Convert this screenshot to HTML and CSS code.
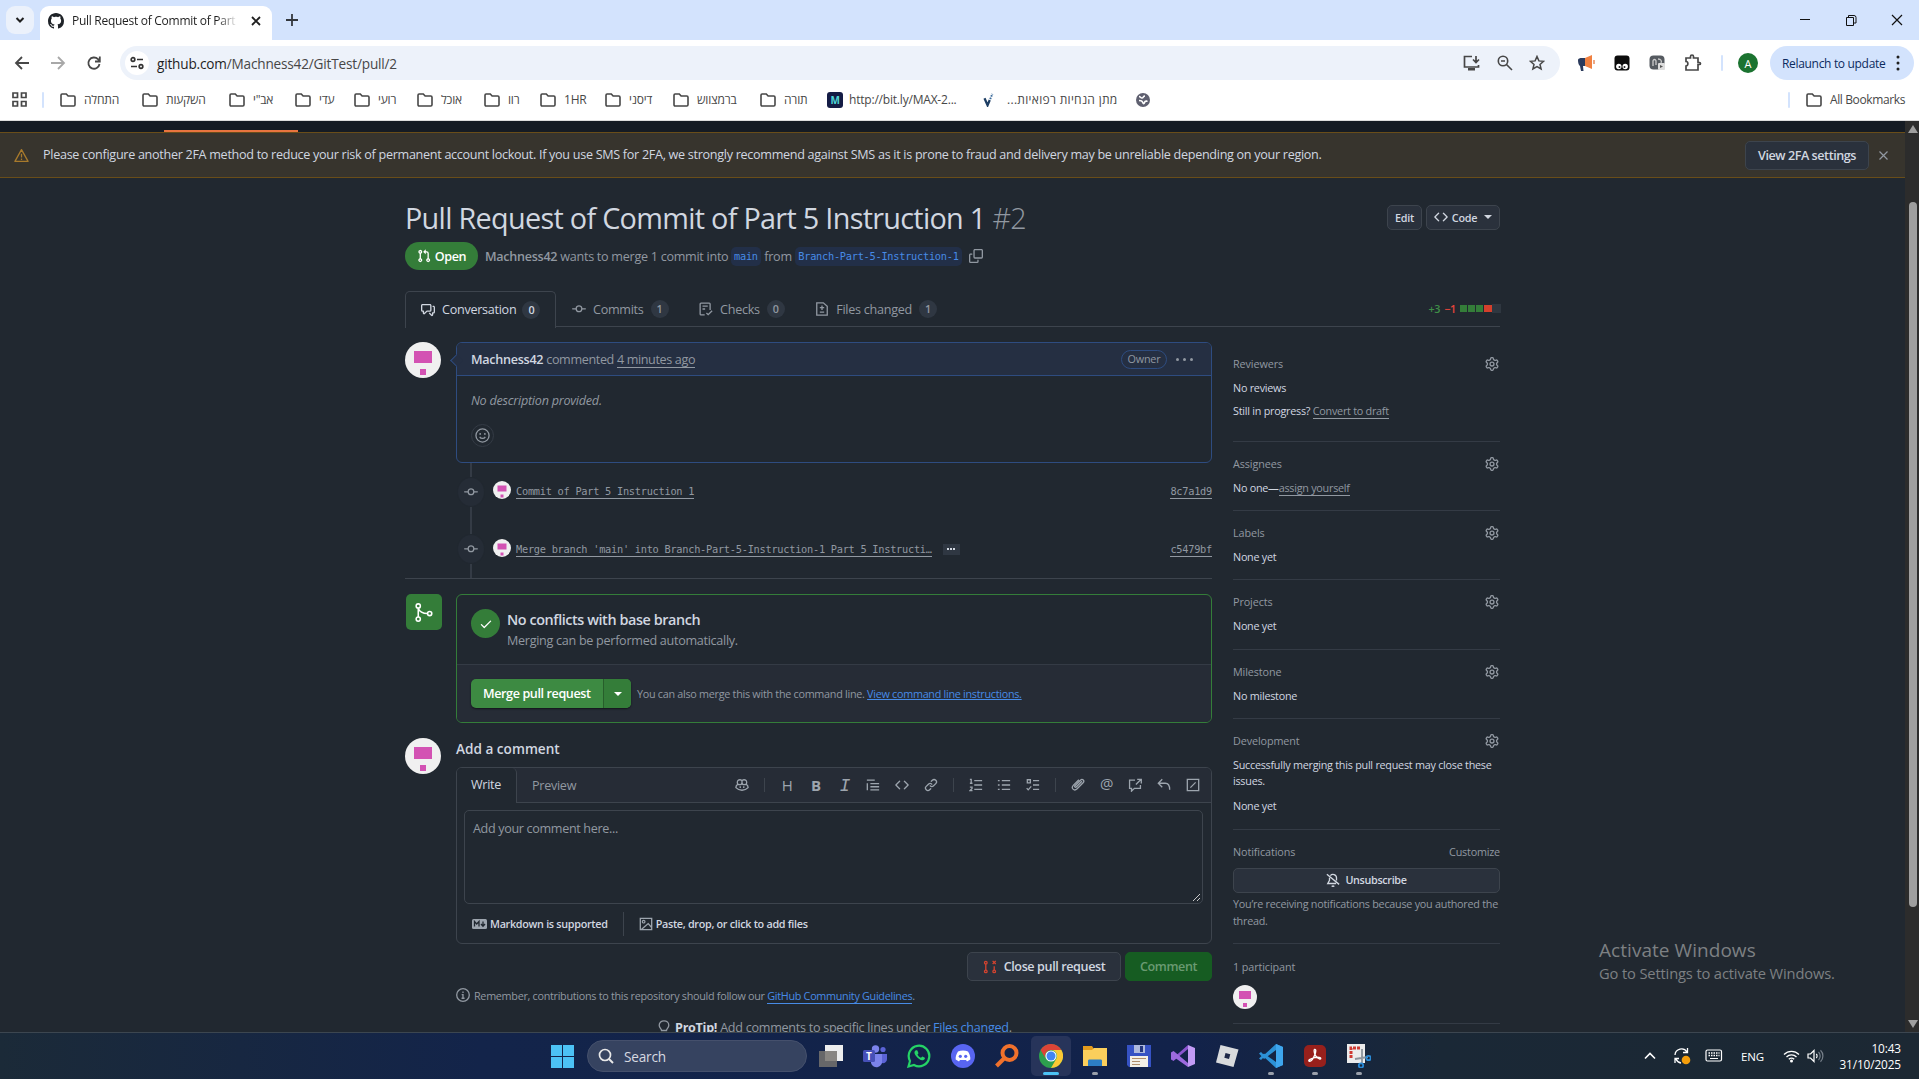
FILE: index.html
```html
<!DOCTYPE html>
<html lang="en">
<head>
<meta charset="utf-8">
<title>Pull Request of Commit of Part 5 Instruction 1</title>
<link rel="stylesheet" href="styles.css">
</head>
<body>
<svg class="defs" width="0" height="0">
  <symbol id="folder" viewBox="0 0 16 14"><path d="M1 2.2C1 1.5 1.4 1 2.1 1h4.2l1.8 2h5.7c.7 0 1.2.5 1.2 1.2v7.6c0 .7-.5 1.2-1.2 1.2H2.1C1.4 13 1 12.500 1 11.800Z" fill="none" stroke="currentColor" stroke-width="1.6"/></symbol>
  <symbol id="pr" viewBox="0 0 16 16"><path d="M1.500 3.250a2.250 2.250 0 1 1 3 2.122v5.256a2.251 2.251 0 1 1-1.500 0V5.372A2.250 2.250 0 0 1 1.500 3.250Zm5.677-.177L9.573.677A.25.25 0 0 1 10 .854V2.500h1A2.500 2.500 0 0 1 13.500 5v5.628a2.251 2.251 0 1 1-1.500 0V5a1 1 0 0 0-1-1h-1v1.646a.25.25 0 0 1-.427.177L7.177 3.427a.25.25 0 0 1 0-.354ZM3.750 2.500a.75.75 0 1 0 0 1.500.75.75 0 0 0 0-1.500Zm0 9.500a.75.75 0 1 0 0 1.500.75.75 0 0 0 0-1.500Zm8.250.75a.75.75 0 1 0 1.500 0 .75.75 0 0 0-1.500 0Z"/></symbol>
  <symbol id="commit" viewBox="0 0 16 16"><path d="M11.930 8.500a4.002 4.002 0 0 1-7.860 0H.75a.75.75 0 0 1 0-1.500h3.320a4.002 4.002 0 0 1 7.860 0h3.320a.75.75 0 0 1 0 1.500Zm-1.430-.75a2.500 2.500 0 1 0-5 0 2.500 2.500 0 0 0 5 0Z"/></symbol>
  <symbol id="code" viewBox="0 0 16 16"><path d="m11.280 3.220 4.250 4.250a.75.75 0 0 1 0 1.060l-4.250 4.250a.749.749 0 0 1-1.275-.326.749.749 0 0 1 .215-.734L13.940 8l-3.720-3.720a.749.749 0 0 1 .326-1.275.749.749 0 0 1 .734.215Zm-6.560 0a.751.751 0 0 1 1.042.018.751.751 0 0 1 .018 1.042L2.060 8l3.720 3.720a.749.749 0 0 1-.326 1.275.749.749 0 0 1-.734-.215L.47 8.530a.75.75 0 0 1 0-1.060Z"/></symbol>
  <symbol id="gear" viewBox="0 0 16 16"><path d="M8 0a8.200 8.200 0 0 1 .701.031C9.444.095 9.990.645 10.160 1.290l.288 1.107c.018.066.079.158.212.224.231.114.454.243.668.386.123.082.233.09.299.071l1.103-.303c.644-.176 1.392.021 1.820.63.27.385.506.792.704 1.218.315.675.111 1.422-.364 1.891l-.814.806c-.049.048-.098.147-.088.294.016.257.016.515 0 .772-.01.147.038.246.088.294l.814.806c.475.469.679 1.216.364 1.891a7.977 7.977 0 0 1-.704 1.217c-.428.61-1.176.807-1.820.63l-1.102-.302c-.067-.019-.177-.011-.3.071a5.909 5.909 0 0 1-.668.386c-.133.066-.194.158-.211.224l-.29 1.106c-.168.646-.715 1.196-1.458 1.260a8.006 8.006 0 0 1-1.402 0c-.743-.064-1.289-.614-1.458-1.260l-.289-1.106c-.018-.066-.079-.158-.212-.224a5.738 5.738 0 0 1-.668-.386c-.123-.082-.233-.09-.299-.071l-1.103.303c-.644.176-1.392-.021-1.820-.63a8.120 8.120 0 0 1-.704-1.218c-.315-.675-.111-1.422.363-1.891l.815-.806c.05-.048.098-.147.088-.294a6.214 6.214 0 0 1 0-.772c.01-.147-.038-.246-.088-.294l-.815-.806C.635 6.045.431 5.298.746 4.623a7.920 7.920 0 0 1 .704-1.217c.428-.61 1.176-.807 1.820-.63l1.102.302c.067.019.177.011.3-.071.214-.143.437-.272.668-.386.133-.066.194-.158.211-.224l.29-1.106C6.009.645 6.556.095 7.299.03 7.530.01 7.764 0 8 0Zm-.571 1.525c-.036.003-.108.036-.137.146l-.289 1.105c-.147.561-.549.967-.998 1.189-.173.086-.34.183-.5.29-.417.278-.97.423-1.529.27l-1.103-.303c-.109-.03-.175.016-.195.045-.22.312-.412.644-.573.99-.014.031-.021.11.059.19l.815.806c.411.406.562.957.53 1.456a4.709 4.709 0 0 0 0 .582c.032.499-.119 1.050-.53 1.456l-.815.806c-.081.08-.073.159-.059.19.162.346.353.677.573.989.02.03.085.076.195.046l1.102-.303c.56-.153 1.113-.008 1.530.27.161.107.328.204.501.29.447.222.85.629.997 1.189l.289 1.105c.029.109.101.143.137.146a6.600 6.600 0 0 0 1.142 0c.036-.003.108-.036.137-.146l.289-1.105c.147-.561.549-.967.998-1.189.173-.086.34-.183.5-.29.417-.278.97-.423 1.529-.27l1.103.303c.109.029.175-.016.195-.045.22-.313.411-.644.573-.99.014-.031.021-.11-.059-.19l-.815-.806c-.411-.406-.562-.957-.53-1.456a4.709 4.709 0 0 0 0-.582c-.032-.499.119-1.050.53-1.456l.815-.806c.081-.08.073-.159.059-.19a6.464 6.464 0 0 0-.573-.989c-.02-.03-.085-.076-.195-.046l-1.102.303c-.56.153-1.113.008-1.530-.27a4.440 4.440 0 0 0-.501-.29c-.447-.222-.85-.629-.997-1.189l-.289-1.105c-.029-.11-.101-.143-.137-.146a6.600 6.600 0 0 0-1.142 0ZM11 8a3 3 0 1 1-6 0 3 3 0 0 1 6 0ZM9.500 8a1.500 1.500 0 1 0-3.001.001A1.500 1.500 0 0 0 9.500 8Z"/></symbol>
  <symbol id="avatar" viewBox="0 0 36 36"><circle cx="18" cy="18" r="18" fill="#f0f0f0"/><path d="M9 9h18v12H9zM15 27h6v6h-6z" fill="#d352b3"/></symbol>
</svg>

<header class="browser">
  <div class="tabstrip">
    <span class="tab-search"><svg width="10" height="8" viewBox="0 0 10 8"><path d="M1.500 2 5 5.500 8.500 2" fill="none" stroke="#1f1f1f" stroke-width="2"/></svg></span>
    <div class="tab">
      <svg width="16" height="16" viewBox="0 0 16 16"><path fill="#1f2328" d="M8 0c4.420 0 8 3.580 8 8a8.013 8.013 0 0 1-5.450 7.590c-.4.08-.55-.17-.55-.38 0-.27.01-1.130.01-2.200 0-.75-.25-1.230-.54-1.480 1.780-.2 3.650-.88 3.650-3.950 0-.88-.31-1.590-.82-2.150.08-.2.36-1.020-.08-2.120 0 0-.67-.22-2.200.82-.64-.18-1.320-.27-2-.27-.68 0-1.360.09-2 .27-1.530-1.030-2.200-.82-2.200-.82-.44 1.100-.16 1.920-.08 2.120-.51.56-.82 1.280-.82 2.150 0 3.060 1.860 3.750 3.640 3.950-.23.2-.44.55-.51 1.070-.46.21-1.610.55-2.330-.66-.15-.24-.6-.83-1.230-.82-.67.01-.27.38.01.53.34.19.73.9.82 1.130.16.45.68 1.310 2.690.94 0 .67.01 1.300.01 1.490 0 .21-.15.45-.55.38A7.995 7.995 0 0 1 0 8c0-4.420 3.580-8 8-8Z"/></svg>
      <span class="tab-title">Pull Request of Commit of Part 5</span>
      <svg class="tab-close" width="10" height="10" viewBox="0 0 10 10"><path d="m1 1 8 8m0-8-8 8" stroke="#1f1f1f" stroke-width="1.800"/></svg>
    </div>
    <svg class="new-tab" width="12" height="12" viewBox="0 0 12 12"><path d="M6 0v12M0 6h12" stroke="#33373d" stroke-width="1.800"/></svg>
    <div class="window-controls">
      <svg width="12" height="12" viewBox="0 0 12 12"><path d="M1 5.500h10" stroke="#111"/></svg>
      <svg width="12" height="12" viewBox="0 0 12 12"><path d="M1.500 3.500h7v8h-7zM3.500 3V1.500h5.500a2 2 0 0 1 2 2V9H9" fill="none" stroke="#111"/></svg>
      <svg width="12" height="12" viewBox="0 0 12 12"><path d="m1 1 10 10m0-10L1 11" stroke="#111" stroke-width="1.200"/></svg>
    </div>
  </div>
  <div class="toolbar">
    <div class="nav">
      <svg width="16" height="16" viewBox="0 0 16 16"><path d="M15 8H2.500M8 2 2 8l6 6" fill="none" stroke="#474747" stroke-width="1.800"/></svg>
      <svg width="16" height="16" viewBox="0 0 16 16"><path d="M1 8h12.500M8 2l6 6-6 6" fill="none" stroke="#a8a8a8" stroke-width="1.800"/></svg>
      <svg width="16" height="16" viewBox="0 0 16 16"><path d="M13.500 9A5.600 5.600 0 1 1 12 4.200L13.500 6M13.800 1.500V6.500H9" fill="none" stroke="#474747" stroke-width="1.800"/></svg>
    </div>
    <div class="omnibox">
      <span class="site-info"><svg width="14" height="14" viewBox="0 0 14 14"><g fill="none" stroke="#333" stroke-width="1.700"><circle cx="3" cy="3.500" r="1.800"/><circle cx="11" cy="10.500" r="1.800"/><path d="M7 3.500h6M1 10.500h6"/></g></svg></span>
      <span class="url">github.com<i>/Machness42/GitTest/pull/2</i></span>
      <div class="omni-actions">
        <svg width="18" height="16" viewBox="0 0 18 16"><path d="M9 1.500H1.500v10.500h14V10M13 1v6M10 4.500l3 3 3-3" fill="none" stroke="#474747" stroke-width="1.700"/><path d="M5 13h7v2.500H5z" fill="#474747"/></svg>
        <svg width="16" height="16" viewBox="0 0 16 16"><g fill="none" stroke="#474747" stroke-width="1.600"><circle cx="6" cy="6" r="4.700"/><path d="m9.500 9.500 5.500 5.500M4 6h4"/></g></svg>
        <svg width="16" height="16" viewBox="0 0 16 16"><path d="m8 1.500 1.900 4.400 4.700.4-3.600 3.100 1.100 4.600L8 11.600 3.900 14 5 9.400 1.400 6.300l4.700-.4Z" fill="none" stroke="#474747" stroke-width="1.500"/></svg>
      </div>
    </div>
    <div class="extensions">
      <svg width="18" height="18" viewBox="0 0 18 18"><path d="M1 6c0-1.500 2-2 4-2h3v8H6l.5 5H4l-1-5C1.500 11 1 8 1 6Z" fill="#2b3a5c"/><path d="M8 4l7-3v14l-7-3Z" fill="#f08040"/><path d="M17 6v4" stroke="#e98b5b" stroke-width="1.500"/></svg>
      <svg width="16" height="16" viewBox="0 0 16 16"><rect x=".5" y=".5" width="15" height="15" rx="3" fill="#0b0b0b"/><circle cx="4.800" cy="11.500" r="2.700" fill="#fff"/><circle cx="11.200" cy="11.500" r="2.700" fill="#fff"/><circle cx="5.500" cy="12" r="1" fill="#222"/><circle cx="10.500" cy="12" r="1" fill="#222"/></svg>
      <svg width="16" height="16" viewBox="0 0 16 16"><rect x=".5" y=".5" width="15" height="14" rx="4" fill="#555a60"/><path d="M4 11V6c0-2 3-2 3 0v4M9 4c3 0 4 2 3 4" fill="none" stroke="#ccc" stroke-width="1.300"/><rect x="9" y="8" width="7" height="7" rx="1" fill="#ddd"/><path d="M11 10l3 1.500-3 1.500Z" fill="#555"/></svg>
      <svg width="18" height="18" viewBox="0 0 18 18"><path d="M2 4h4.500V2.500a1.500 1.500 0 0 1 3 0V4H14v4.500h1.500a1 1 0 0 1 0 2H14V16H2v-4c2.500 0 2.500-4.500 0-4.500Z" fill="none" stroke="#474747" stroke-width="1.700"/></svg>
      <span class="bar"></span>
      <span class="profile">A</span>
    </div>
    <div class="relaunch">Relaunch to update<svg width="4" height="16" viewBox="0 0 4 16"><g fill="#1f1f1f"><circle cx="2" cy="2" r="1.500"/><circle cx="2" cy="8" r="1.500"/><circle cx="2" cy="14" r="1.500"/></g></svg></div>
  </div>
  <div class="bookmarks">
    <svg class="apps" width="15" height="15" viewBox="0 0 15 15"><path d="M1 1h4.500v4.500H1zM9.500 1H14v4.500H9.500zM1 9.500h4.500V14H1zM9.500 9.500H14V14H9.500z" fill="none" stroke="#474747" stroke-width="1.700"/></svg>
    <span class="bar"></span>
    <div class="bm-list">
      <span><svg><use href="#folder"/></svg>התחלה</span>
      <span><svg><use href="#folder"/></svg>השקעות</span>
      <span><svg><use href="#folder"/></svg>אב"י</span>
      <span><svg><use href="#folder"/></svg>עדי</span>
      <span><svg><use href="#folder"/></svg>רועי</span>
      <span><svg><use href="#folder"/></svg>אוכל</span>
      <span><svg><use href="#folder"/></svg>רוו</span>
      <span><svg><use href="#folder"/></svg>1HR</span>
      <span><svg><use href="#folder"/></svg>דיסני</span>
      <span><svg><use href="#folder"/></svg>ברמצווש</span>
      <span><svg><use href="#folder"/></svg>תורה</span>
      <span class="bm-max"><b>M</b>http://bit.ly/MAX-2...</span>
      <span class="bm-v"><svg viewBox="0 0 16 16"><path d="m4 6 3.500 8L10 8" fill="none" stroke="#1d3d63" stroke-width="2.600"/><path d="m10.500 7 2.500-6" stroke="#3c6c9c" stroke-width="2.200" stroke-dasharray="2 1"/></svg><bdi dir="rtl">מתן הנחיות רפואיות...</bdi></span>
      <span><svg width="14" height="14" viewBox="0 0 14 14"><circle cx="7" cy="7" r="7" fill="#5f6070"/><path d="M3 3.500c1.500 0 1.500 1.500 3 1.500s1-2 3-2M3 7.500c2 0 3 0 3.500 1.500S8 11.500 8.500 9.500s1.500-1 3-1.500" fill="none" stroke="#fff" stroke-width="1.600"/></svg></span>
    </div>
    <span class="bar"></span>
    <span class="all-bm"><svg><use href="#folder"/></svg>All Bookmarks</span>
  </div>
</header>

<div class="viewport">
  <div class="page">
    <div class="repo-nav"><span></span></div>
    <div class="banner">
      <svg width="15" height="15" viewBox="0 0 16 16"><path d="M8 1.700 15 14.300H1ZM8 6v4M8 11.300v1.500" fill="none" stroke="#a87a2c" stroke-width="1.400" stroke-linejoin="round"/></svg>
      <p>Please configure another 2FA method to reduce your risk of permanent account lockout. If you use SMS for 2FA, we strongly recommend against SMS as it is prone to fraud and delivery may be unreliable depending on your region.</p>
      <a class="btn">View 2FA settings</a>
      <svg class="dismiss" width="9" height="9" viewBox="0 0 9 9"><path d="m.5.5 8 8m0-8-8 8" stroke="#9198a1" stroke-width="1.200"/></svg>
    </div>

    <main class="container">
      <div class="title-row">
        <h1>Pull Request of Commit of Part 5 Instruction 1 <span>#2</span></h1>
        <a class="btn btn-sm edit">Edit</a>
        <a class="btn btn-sm code-btn"><svg width="14" height="14"><use href="#code"/></svg>Code<i class="caret"></i></a>
      </div>
      <div class="status-row">
        <span class="state"><svg width="14" height="14"><use href="#pr"/></svg>Open</span>
        <span class="merge-info"><b>Machness42</b> wants to merge 1 commit into</span>
        <span class="ref">main</span><span class="from">from</span><span class="ref">Branch-Part-5-Instruction-1</span>
        <svg class="copy" width="14" height="14" viewBox="0 0 16 16"><path d="M0 6.750C0 5.784.784 5 1.750 5h1.500a.75.75 0 0 1 0 1.500h-1.500a.25.25 0 0 0-.25.25v7.500c0 .138.112.25.25.25h7.500a.25.25 0 0 0 .25-.25v-1.500a.75.75 0 0 1 1.500 0v1.500A1.750 1.750 0 0 1 9.250 16h-7.500A1.750 1.750 0 0 1 0 14.250ZM5 1.750C5 .784 5.784 0 6.750 0h7.500C15.216 0 16 .784 16 1.750v7.500A1.750 1.750 0 0 1 14.250 11h-7.500A1.750 1.750 0 0 1 5 9.250Zm1.750-.25a.25.25 0 0 0-.25.25v7.500c0 .138.112.25.25.25h7.500a.25.25 0 0 0 .25-.25v-7.500a.25.25 0 0 0-.25-.25Z"/></svg>
      </div>
      <nav class="tabs">
        <a class="active"><svg width="14" height="14" viewBox="0 0 16 16"><path d="M1.750 1h8.500c.966 0 1.750.784 1.750 1.750v5.500A1.750 1.750 0 0 1 10.250 10H7.061l-2.574 2.573A1.458 1.458 0 0 1 2 11.543V10h-.25A1.750 1.750 0 0 1 0 8.250v-5.500C0 1.784.784 1 1.750 1ZM1.500 2.750v5.500c0 .138.112.25.25.25h1a.75.75 0 0 1 .75.75v2.190l2.720-2.720a.749.749 0 0 1 .53-.22h3.500a.25.25 0 0 0 .25-.25v-5.500a.25.25 0 0 0-.25-.25h-8.500a.25.25 0 0 0-.25.25Zm13 2a.25.25 0 0 0-.25-.25h-.5a.75.75 0 0 1 0-1.500h.5c.966 0 1.750.784 1.750 1.750v5.500A1.750 1.750 0 0 1 14.250 12H14v1.543a1.458 1.458 0 0 1-2.487 1.030L9.220 12.280a.749.749 0 0 1 .326-1.275.749.749 0 0 1 .734.215l2.220 2.220v-2.190a.75.75 0 0 1 .75-.75h1a.25.25 0 0 0 .25-.25Z"/></svg>Conversation<em>0</em></a>
        <a><svg width="14" height="14"><use href="#commit"/></svg>Commits<em>1</em></a>
        <a><svg width="14" height="14" viewBox="0 0 16 16"><path d="M6.500 14.700H2.300a1 1 0 0 1-1-1V2.300a1 1 0 0 1 1-1h9.400a1 1 0 0 1 1 1V9M4 4.700h6M4 8h3M8.500 12.500l2 2 4.500-4.500" fill="none" stroke="currentColor" stroke-width="1.500"/></svg>Checks<em>0</em></a>
        <a><svg width="14" height="14" viewBox="0 0 16 16"><path d="M2 1h7.500L14 5v10H2ZM8 4v5M5.500 6.500h5M5.500 11.500h5" fill="none" stroke="currentColor" stroke-width="1.500"/></svg>Files changed<em>1</em></a>
        <div class="diffstat"><b class="add">+3</b><b class="del">−1</b><i></i><i></i><i></i><i class="r"></i><i class="n"></i></div>
      </nav>

      <div class="columns">
        <section class="discussion">
          <div class="thread">
            <svg class="avatar"><use href="#avatar"/></svg>
            <article class="comment">
              <header><b>Machness42</b>&nbsp;commented&nbsp;<u>4 minutes ago</u><span class="owner">Owner</span><span class="dots"><i></i><i></i><i></i></span></header>
              <p>No description provided.</p>
              <span class="react"><svg width="15" height="15" viewBox="0 0 16 16"><g fill="none" stroke="#9198a1" stroke-width="1.400"><circle cx="8" cy="8" r="7"/><path d="M5 9.500c1.300 2.200 4.700 2.200 6 0"/></g><circle cx="5.500" cy="6.300" r="1" fill="#9198a1"/><circle cx="10.500" cy="6.300" r="1" fill="#9198a1"/></svg></span>
            </article>
          </div>
          <div class="timeline">
            <div class="event"><span class="badge"><svg width="14" height="14"><use href="#commit"/></svg></span><svg class="mini"><use href="#avatar"/></svg><a>Commit of Part 5 Instruction 1</a><a class="sha">8c7a1d9</a></div>
            <div class="event"><span class="badge"><svg width="14" height="14"><use href="#commit"/></svg></span><svg class="mini"><use href="#avatar"/></svg><a>Merge branch 'main' into Branch-Part-5-Instruction-1 Part 5 Instructi…</a><span class="more"><i></i><i></i><i></i></span><a class="sha">c5479bf</a></div>
          </div>
          <div class="thread merge">
            <span class="merge-icon"><svg width="21" height="21" viewBox="0 0 16 16"><g fill="none" stroke="#fff" stroke-width="1.200"><circle cx="4" cy="3" r="1.600"/><circle cx="4" cy="13" r="1.600"/><circle cx="12.700" cy="8.800" r="1.600"/><path d="M4 4.600v6.800M4 5c1 2.500 3.500 3.800 7 3.800"/></g></svg></span>
            <div class="merge-box">
              <div class="mergeable">
                <span class="ok"><svg width="14" height="14" viewBox="0 0 16 16"><path fill="#fff" d="M13.780 4.220a.75.75 0 0 1 0 1.060l-7.250 7.250a.75.75 0 0 1-1.060 0L2.220 9.280a.751.751 0 0 1 .018-1.042.751.751 0 0 1 1.042-.018L6 10.940l6.720-6.720a.75.75 0 0 1 1.060 0Z"/></svg></span>
                <div><h3>No conflicts with base branch</h3><p>Merging can be performed automatically.</p></div>
              </div>
              <div class="merge-actions"><span class="merge-btn">Merge pull request<span><i class="caret"></i></span></span><p>You can also merge this with the command line. <a>View command line instructions.</a></p></div>
            </div>
          </div>
          <div class="thread">
            <svg class="avatar"><use href="#avatar"/></svg>
            <div class="reply">
              <h3>Add a comment</h3>
              <div class="editor">
                <div class="editor-head">
                  <span class="write">Write</span><span class="preview">Preview</span>
                  <div class="tools">
                    <svg viewBox="0 0 16 16"><path d="M3 7c-1-3 0-5 2.500-5S8 3 8 5 7 7.500 5.500 7.500 3 7 3 7Zm10 0c1-3 0-5-2.500-5S8 3 8 5s1 2.500 2.500 2.500S13 7 13 7ZM2.800 7.500C1.500 8.500 1 9 1 11c2 2 4.500 3 7 3s5-1 7-3c0-2-.5-2.500-1.800-3.500M6 9.500v2M10 9.500v2"/></svg>
                    <s></s>
                    <b>H</b><b class="bold">B</b><b class="ital">I</b>
                    <svg viewBox="0 0 16 16"><path d="M1 2.500h9M5 6.500h10M5 10h10M5 13.500h10M1.500 6v8"/></svg>
                    <svg class="solid"><use href="#code"/></svg>
                    <svg class="solid" viewBox="0 0 16 16"><path d="m7.775 3.275 1.250-1.250a3.500 3.500 0 1 1 4.950 4.950l-2.500 2.500a3.500 3.500 0 0 1-4.950 0 .751.751 0 0 1 .018-1.042.751.751 0 0 1 1.042-.018 1.998 1.998 0 0 0 2.830 0l2.500-2.500a2.002 2.002 0 0 0-2.830-2.830l-1.250 1.250a.751.751 0 0 1-1.042-.018.751.751 0 0 1-.018-1.042Zm-4.690 9.640a1.998 1.998 0 0 0 2.830 0l1.250-1.250a.751.751 0 0 1 1.042.018.751.751 0 0 1 .018 1.042l-1.250 1.250a3.500 3.500 0 1 1-4.950-4.950l2.500-2.500a3.500 3.500 0 0 1 4.950 0 .751.751 0 0 1-.018 1.042.751.751 0 0 1-1.042.018 1.998 1.998 0 0 0-2.830 0l-2.500 2.500a1.998 1.998 0 0 0 0 2.830Z"/></svg>
                    <s></s>
                    <svg viewBox="0 0 16 16"><path d="M6 3h9M6 8h9M6 13h9M1 1.500h1.500V6M1 6h3M1 10.500h2.500V12L1 14.500h3"/></svg>
                    <svg viewBox="0 0 16 16"><path d="M5.500 3H15M5.500 8H15M5.500 13H15M1 3h2M1 8h2M1 13h2"/></svg>
                    <svg viewBox="0 0 16 16"><path d="M8 3h7M8 8h7M8 13h7M1.500 2h3.500v3.500H1.500ZM.8 11.500 2.500 13.500 6 9.500"/></svg>
                    <s></s>
                    <svg viewBox="0 0 16 16"><path d="M12.500 3.800 6 10.300c-1 1-2.500-.5-1.500-1.500l6.300-6.300c2.300-2.200 5.200.7 3 3L7 12.300c-3.500 3.300-7.500-.8-4.200-4.200L9 2"/></svg>
                    <b class="at">@</b>
                    <svg viewBox="0 0 16 16"><path d="M8 2.500H1.800v9.300H4V15l3.300-3.200h6.900V8M9 7.500l5.500-5.500M10.500 1.500h4.700v4.700"/></svg>
                    <svg viewBox="0 0 16 16"><path d="M6 1.500 1.500 6 6 10.500M1.500 6h8c3.500 0 5 2.500 5 7.500"/></svg>
                    <svg viewBox="0 0 16 16"><path d="M1.500 1.500h13v13h-13ZM5 11l6-6"/></svg>
                  </div>
                </div>
                <div class="textarea">Add your comment here...<svg width="9" height="9" viewBox="0 0 9 9"><path d="m1 8 7-7M5 8l3-3" stroke="#c8c8c8"/></svg></div>
                <div class="editor-foot">
                  <svg width="15" height="12" viewBox="0 0 15 12"><rect y="1" width="15" height="10" rx="1.500" fill="#9da5ae"/><path d="M2.500 8.500v-5L4.700 6 7 3.500v5M11 3.500v4M9 6l2 2.300L13 6" fill="none" stroke="#212830" stroke-width="1.300"/></svg><b>Markdown is supported</b><s></s>
                  <svg width="14" height="14" viewBox="0 0 16 16"><path d="M1.500 1.500h13v13h-13ZM3 14l7.500-6.500L14.500 12" fill="none" stroke="#9da5ae" stroke-width="1.500"/><circle cx="5.300" cy="5.300" r="1.500" fill="none" stroke="#9da5ae" stroke-width="1.300"/></svg><b>Paste, drop, or click to add files</b>
                </div>
              </div>
              <div class="form-actions">
                <a class="btn close"><svg width="14" height="14" viewBox="0 0 16 16"><g fill="none" stroke="#d4432f" stroke-width="1.500"><circle cx="3.200" cy="3" r="1.500"/><circle cx="3.200" cy="13" r="1.500"/><circle cx="12.800" cy="13" r="1.500"/><path d="M3.200 4.500v7M12.800 7v4.500M11 1l3.600 3.600M14.600 1 11 4.600"/></g></svg>Close pull request</a>
                <a class="btn submit">Comment</a>
              </div>
              <p class="remember"><svg width="14" height="14" viewBox="0 0 16 16"><g fill="none" stroke="#9198a1" stroke-width="1.500"><circle cx="8" cy="8" r="7.200"/><path d="M6.500 7.500H8v4M6.300 11.700h3.500M8 4v1.700"/></g></svg><span>Remember, contributions to this repository should follow our <a>GitHub Community Guidelines</a>.</span></p>
            </div>
          </div>
          <p class="protip"><svg width="12" height="14" viewBox="0 0 12 14"><path d="M3.500 10.500C3.500 8.500 1.200 8 1.200 5.200a4.800 4.400 0 0 1 9.600 0c0 2.800-2.300 3.300-2.300 5.300ZM4 13h4" fill="none" stroke="#9198a1" stroke-width="1.300"/></svg><span><b>ProTip!</b> Add comments to specific lines under <a>Files changed</a>.</span></p>
        </section>

        <aside>
          <section class="s-rev"><h4>Reviewers<svg><use href="#gear"/></svg></h4><p>No reviews</p><p class="gap7">Still in progress? <u>Convert to draft</u></p></section>
          <section><h4>Assignees<svg><use href="#gear"/></svg></h4><p>No one—<u>assign yourself</u></p></section>
          <section><h4>Labels<svg><use href="#gear"/></svg></h4><p>None yet</p></section>
          <section class="s-proj"><h4>Projects<svg><use href="#gear"/></svg></h4><p>None yet</p></section>
          <section><h4>Milestone<svg><use href="#gear"/></svg></h4><p>No milestone</p></section>
          <section class="s-dev"><h4>Development<svg><use href="#gear"/></svg></h4><p>Successfully merging this pull request may close these issues.</p><p class="gap9">None yet</p></section>
          <section class="s-not"><h4>Notifications<span>Customize</span></h4><a class="btn unsub"><svg width="14" height="14" viewBox="0 0 16 16"><path d="M1 1.500 15 13M4 5.500v3L2 12h9.500M5 3c2-2.500 7-1.500 7 2.500v3M6.500 14.500c.8.800 2.200.8 3 0" fill="none" stroke="#d1d7e0" stroke-width="1.500"/></svg>Unsubscribe</a><p class="muted">You’re receiving notifications because you authored the thread.</p></section>
          <section class="s-part"><h4>1 participant</h4><svg class="pa"><use href="#avatar"/></svg></section>
        </aside>
      </div>
    </main>
  </div>
  <div class="scrollbar"><i class="up"></i><i class="thumb"></i><i class="down"></i></div>
  <div class="watermark"><b>Activate Windows</b>Go to Settings to activate Windows.</div>
</div>

<footer class="taskbar">
  <div class="apps-row">
    <svg class="start" width="23" height="23" viewBox="0 0 23 23"><path d="M0 0h11v11H0zM12 0h11v11H12zM0 12h11v11H0zM12 12h11v11H12z" fill="#4cc2f5"/></svg>
    <div class="search"><svg width="16" height="16" viewBox="0 0 16 16"><circle cx="7" cy="7" r="5.500" fill="none" stroke="#e8e8e8" stroke-width="1.700"/><path d="m11 11 4 4" stroke="#e8e8e8" stroke-width="1.900"/></svg>Search</div>
    <span class="app"><svg viewBox="0 0 24 24"><path d="M6 1h18v16H6z" fill="#eee"/><path d="M0 7h18v16H0z" fill="#77736f" opacity=".85"/></svg></span>
    <span class="app"><svg viewBox="0 0 24 24"><circle cx="20" cy="5.500" r="2.600" fill="#5b63d6"/><circle cx="12.500" cy="5" r="3.700" fill="#7b83eb"/><path d="M8 10h11v6a5.500 5.500 0 0 1-11 3Z" fill="#7b83eb"/><path d="M19 10h5v5a4 4 0 0 1-5 4Z" fill="#5b63d6"/><rect y="6" width="12" height="12" rx="1.500" fill="#4650b8"/><text x="6" y="15.500" text-anchor="middle" class="t-teams">T</text></svg></span>
    <span class="app"><svg viewBox="0 0 24 24"><path d="M1.500 22.500 3 17a10.300 10.300 0 1 1 4 4Z" fill="none" stroke="#25d366" stroke-width="2.200"/><path d="M8.500 6.500c-1.500 1-1.500 3 .5 5.500 2.500 3.200 5.500 5 7.500 4s1.500-2 1-2.500l-2.200-1-1.300 1.300c-1.600-.6-3-2-3.500-3.300l1-1.200-1-2.500c-.4-.6-1.200-.6-2-.3Z" fill="#25d366"/></svg></span>
    <span class="app"><svg viewBox="0 0 24 24"><circle cx="12" cy="12" r="12" fill="#5865f2"/><path d="M7 7.500c3-1.200 7-1.200 10 0 2 3 2.500 5.500 2.300 8L16 17.500l-1-1.500H9l-1 1.500-3.300-2C4.500 13 5 10.500 7 7.500Z" fill="#fff"/><circle cx="9.300" cy="12.300" r="1.600" fill="#5865f2"/><circle cx="14.700" cy="12.300" r="1.600" fill="#5865f2"/></svg></span>
    <span class="app"><svg viewBox="0 0 24 24"><g fill="none" stroke="#f0712c"><circle cx="14.500" cy="9" r="7" stroke-width="4"/><path d="m9.500 14-8 8" stroke-width="4"/></g></svg></span>
    <span class="app current"><svg viewBox="0 0 24 24"><circle cx="12" cy="12" r="12" fill="#2da04e"/><path d="M1.600 6A12 12 0 0 1 22.400 6H12a6 6 0 0 0-5.200 9Z" fill="#dc4437"/><path d="M22.400 6A12 12 0 0 1 12 24l5.200-9A6 6 0 0 0 12 6Z" fill="#fcc934"/><circle cx="12" cy="12" r="5.600" fill="#fff"/><circle cx="12" cy="12" r="4.500" fill="#4285f4"/></svg></span>
    <span class="app open"><svg viewBox="0 0 24 24"><path d="M0 2h9l2 3v4H0Z" fill="#e39b1d"/><path d="M0 6h9l2-2h13v18H0Z" fill="#fbcf5c"/><path d="M5 22v-5c0-1 .5-1.500 1.500-1.500h11c1 0 1.500.5 1.500 1.500v5Z" fill="#2d7ec4"/></svg></span>
    <span class="app"><svg viewBox="0 0 24 24"><path d="M0 1h24v22H2l-2-2Z" fill="#3652c4"/><path d="M7 1h11v8H7z" fill="#aeb9dd"/><path d="M13 2h3v6h-3z" fill="#24367e"/><path d="M3 12h18v11H3z" fill="#f3efe6"/><path d="M5 14.500h14M5 17.500h8M5 20.500h8" stroke="#b08e6b"/></svg></span>
    <span class="app"><svg viewBox="0 0 24 24"><path d="M17 1 5 11.500 2.500 9.500 0 10.500v5l2.500 1.500L17 5Z" fill="#8a55cf"/><path d="M0 8.500 2.500 7 5 9l12 10v4L5 14.500l-2.500 2L0 15Z" fill="#9c6ade"/><path d="m17 1 7 3v16l-7 3Z" fill="#c29bf5"/></svg></span>
    <span class="app"><svg viewBox="0 0 24 24"><path d="m5.500 1 18 4.500L18.500 23 1 18.500Z" fill="#d9dbdd"/><path d="m10.500 9 4.800 1.200L14 15l-4.700-1.200Z" fill="#1d2746"/></svg></span>
    <span class="app open"><svg viewBox="0 0 24 24"><path d="M17 0 24 3v18l-7 3L5 13 2 16l-2-1.500 5-5L17 18V6L5 15 0 9.500 2 8l3 3Z" fill="#2c91d6"/><path d="m17 0 7 3v18l-7 3Z" fill="#3ea6ee"/></svg></span>
    <span class="app open"><svg viewBox="0 0 24 24"><rect x="1" y="1" width="22" height="22" rx="5" fill="#97201c"/><path d="M11.500 5.500c1.800-.8 1.500 2.500.2 5.500-1.200 3-3.500 6.500-5.200 6.300-2-.4.500-2.800 5.200-3.700 3.500-.7 6.300-.1 6 1.100-.5 1.300-4.500-1-5.700-4.200-.7-2-1-4.500-.5-5Z" fill="none" stroke="#fff" stroke-width="1.400"/></svg></span>
    <span class="app open"><svg viewBox="0 0 24 24"><path d="M0 0h18v19H0z" fill="#ececec"/><path d="M4 14V4h10" fill="none" stroke="#cf3b33" stroke-width="3" stroke-dasharray="3 1"/><path d="m8 15 13-2M15 5v14" stroke="#8d949c" stroke-width="1.800"/><circle cx="21.500" cy="14" r="2.200" fill="none" stroke="#2a8ad6" stroke-width="1.800"/><circle cx="14" cy="21.500" r="2.200" fill="none" stroke="#2a8ad6" stroke-width="1.800"/></svg></span>
  </div>
  <div class="tray">
    <svg class="chev" width="12" height="8" viewBox="0 0 12 8"><path d="m1 6.500 5-5 5 5" fill="none" stroke="#fff" stroke-width="1.600"/></svg>
    <svg width="18" height="18" viewBox="0 0 18 18"><g fill="none" stroke="#fff" stroke-width="1.300"><path d="M2 8a6.500 6.500 0 0 1 12-3M14.500 1v4.500H10M8 16a6.500 6.500 0 0 1-5-4M2 16v-4.500h4"/></g><circle cx="13" cy="13" r="4.300" fill="#f59e0b"/></svg>
    <svg width="18" height="14" viewBox="0 0 18 14"><rect x="1" y="1" width="15.500" height="11" rx="1.500" fill="none" stroke="#fff" stroke-width="1.200"/><path d="M3.500 4h11M3.500 6.500h11" stroke="#fff" stroke-width="1.400" stroke-dasharray="1.500 1"/><path d="M5 9.500h8" stroke="#fff"/></svg>
    <span class="lang">ENG</span>
    <svg class="wifi" width="17" height="14" viewBox="0 0 17 14"><g fill="none" stroke="#fff" stroke-width="1.300"><path d="M1 5.500a10.500 10.500 0 0 1 15 0M3.500 8a7 7 0 0 1 10 0M5.800 10.300a4 4 0 0 1 5.400 0"/></g><circle cx="8.500" cy="12" r="1.500" fill="#fff"/></svg>
    <svg width="17" height="14" viewBox="0 0 17 14"><path d="M1 5h2.500L7 1.500v11L3.500 9H1Z" fill="none" stroke="#fff" stroke-width="1.200"/><path d="M9.300 5c1 1 1 3 0 4" fill="none" stroke="#fff" stroke-width="1.200"/><path d="M11.500 3c2.200 2 2.200 6 0 8M13.500 1.200c3.200 3 3.200 8.600 0 11.600" fill="none" stroke="#77808a" stroke-width="1.200"/></svg>
    <div class="clock">10:43<br>31/10/2025</div>
  </div>
</footer>
</body>
</html>
```
FILE: styles.css
```css
* { box-sizing: border-box; margin: 0; padding: 0; }
body { width: 1919px; height: 1079px; overflow: hidden; font-family: "Open Sans", "Noto Sans", sans-serif; font-stretch: 94%; background: #212830; }
svg { display: block; flex: none; fill: currentColor; }
.defs { position: absolute; }
i { font-style: normal; }
a, u { text-decoration: none; }

/* browser chrome */
.browser { height: 121px; background: #fff; border-bottom: 1px solid #dcdcdc; color: #1f1f1f; font-size: 12px; }
.tabstrip { height: 40px; background: #d3e3fd; display: flex; align-items: center; padding-left: 6px; }
.tab-search { width: 28px; height: 28px; border-radius: 9px; background: #ebf1fb; display: grid; place-items: center; }
.tab { width: 232px; height: 34px; margin: 6px 0 0 6px; background: #fff; border-radius: 9px 9px 0 0; display: flex; align-items: center; padding: 0 11px 5px 8px; }
.tab-title { width: 169px; margin-left: 8px; overflow: hidden; white-space: nowrap; font-size: 12px; letter-spacing: -.28px; -webkit-mask-image: linear-gradient(90deg, #000 88%, transparent); mask-image: linear-gradient(90deg, #000 88%, transparent); }
.tab-close { margin-left: 13px; }
.new-tab { margin-left: 14px; }
.window-controls { margin-left: auto; display: flex; gap: 34px; padding-right: 16px; }
.toolbar { height: 46px; display: flex; align-items: center; }
.nav { width: 120px; padding-left: 14px; display: flex; gap: 20px; }
.omnibox { width: 1440px; height: 34px; border-radius: 17px; background: #edf2fa; display: flex; align-items: center; padding: 0 15px 0 5px; }
.site-info { width: 24px; height: 24px; border-radius: 50%; background: #fff; display: grid; place-items: center; }
.url { margin-left: 8px; font-size: 13.600px; letter-spacing: -.18px; }
.url i { color: #474747; }
.omni-actions { margin-left: auto; display: flex; gap: 16px; align-items: center; }
.extensions { display: flex; align-items: center; padding-left: 17px; gap: 19px; width: 210px; }
.bar { width: 2px; height: 16px; background: #d3e3fd; border-radius: 1px; }
.profile { width: 20px; height: 20px; border-radius: 50%; background: #1b7330; color: #fff; font-size: 11px; display: grid; place-items: center; margin-left: -4px; }
.relaunch { width: 144px; height: 34px; border-radius: 17px; background: #d3e3fd; color: #0b2a5e; display: flex; align-items: center; justify-content: space-between; padding: 0 14px 0 12px; font-size: 12px; letter-spacing: -.32px; white-space: nowrap; }
.bookmarks { height: 34px; padding: 0 14px 7px 12px; display: flex; align-items: center; color: #474747; }
.bookmarks > .bar { margin-left: 15px; }
.bm-list { margin-left: 16px; width: 1728px; display: grid; grid-template-columns: 82px 87px 66px 59px 63px 67px 56px 65px 68px 87px 67px 153px 155px 16px; }
.bookmarks > .bm-list + .bar { margin-left: 0; }
.bm-list span, .all-bm { display: flex; align-items: center; gap: 8px; white-space: nowrap; letter-spacing: -.2px; }
.bookmarks span > svg { width: 16px; height: 14px; }
.all-bm { margin-left: auto; letter-spacing: -.38px; }
.bm-max b { width: 16px; height: 16px; border-radius: 3px; background: #141c45; color: #4fd8d8; font-size: 10px; display: grid; place-items: center; }
.bm-list .bm-max { gap: 6px; }
.bm-list .bm-v { gap: 11px; letter-spacing: .3px; }

/* page viewport */
.viewport { height: 911px; display: flex; position: relative; overflow: hidden; }
.page { width: 1905px; height: 911px; overflow: hidden; color: #d1d7e0; font-size: 12.6px; letter-spacing: -.28px; }
.scrollbar { width: 14px; background: #2c2c2c; display: flex; flex-direction: column; align-items: center; padding: 4px 0; padding-left: 2px; }
.up, .down { border: 5px solid transparent; }
.up { border-top: 0; border-bottom: 8px solid #9f9f9f; }
.down { border-bottom: 0; border-top: 8px solid #9f9f9f; margin-top: auto; }
.thumb { width: 8px; height: 705px; margin-top: 69px; border-radius: 4px; background: #9f9f9f; }
.repo-nav { height: 11px; background: #151b23; display: flex; align-items: flex-end; padding-left: 164px; }
.repo-nav span { width: 134px; height: 2px; background: #e8743f; }
.banner { height: 46px; background: #37342d; border: solid #694d19; border-width: 1px 0; display: flex; align-items: center; padding: 0 17px 0 14px; white-space: nowrap; }
.banner p { margin: -2px 0 0 14px; letter-spacing: -.298px; }
.btn { display: flex; align-items: center; justify-content: center; background: #2a313c; border: 1px solid #3d444d; border-radius: 5px; font-weight: 600; white-space: nowrap; }
.banner .btn { margin-left: auto; width: 124px; height: 29px; letter-spacing: -.45px; }
.dismiss { margin-left: 10px; margin-top: 1px; }
.container { width: 1095px; margin-left: 405px; padding-top: 24px; }
.title-row { height: 34px; display: flex; align-items: center; }
h1 { font-weight: 400; font-size: 28.800px; line-height: 34px; letter-spacing: -.7px; margin: -2px auto 0 0; white-space: nowrap; }
h1 span { color: #9198a1; font-weight: 300; }
.btn-sm { height: 25px; font-size: 10.800px; letter-spacing: -.25px; margin-top: -4px; }
.edit { width: 35px; margin-right: 4px; }
.code-btn { width: 74px; gap: 4px; }
.caret { border: 4px solid transparent; border-top-color: currentColor; border-bottom: 0; }
.code-btn .caret { margin-left: 3px; }
.status-row { height: 28px; margin-top: 6px; display: flex; align-items: center; color: #9198a1; white-space: nowrap; }
.state { width: 73px; height: 28px; border-radius: 14px; background: #347d39; color: #fff; font-weight: 600; display: flex; align-items: center; justify-content: center; gap: 4px; margin-right: 7px; letter-spacing: -.4px; }
.merge-info { width: 246px; }
.merge-info b { font-weight: 600; }
.ref { height: 19px; border-radius: 5px; background: #222f48; color: #478be6; font: 10.300px/19px "DejaVu Sans Mono", monospace; letter-spacing: -.26px; padding: 0 3px; }
.from { margin: 0 3.500px; }
.copy { margin-left: 7px; }
.tabs { height: 36px; margin-top: 21px; border-bottom: 1px solid #3d444d; display: flex; align-items: center; color: #9198a1; white-space: nowrap; }
.tabs a { display: flex; align-items: center; height: 36px; margin: 1px 30.500px 0 0; }
.tabs a svg { margin-right: 7px; }
.tabs .active { width: 151px; border: 1px solid #3d444d; border-bottom: 0; border-radius: 5px 5px 0 0; background: #212830; color: #d1d7e0; padding-left: 15px; height: 37px; margin: 0 16px -1px 0; }
.tabs em { font: 600 10.800px/18px "Open Sans", sans-serif; min-width: 18px; text-align: center; background: #2f3742; border-radius: 9px; margin-left: 7px; height: 18px; }
.tabs .active em { margin-left: 6px; }
.diffstat { margin-left: auto; display: flex; align-items: center; font-size: 10.800px; }
.diffstat b { font-weight: 600; margin-right: 4px; }
.add { color: #3f8e47; } .del { color: #e5443a; }
.diffstat i { width: 7px; height: 7px; margin-right: 1px; background: #347d39; }
.diffstat .r { background: #d4402c; width: 8px; margin-right: 0; }
.diffstat .n { background: #2f3740; width: 9px; height: 9px; margin-right: -1px; }

.columns { display: flex; padding-top: 15px; gap: 21px; }
.discussion { width: 807px; }
.thread { display: flex; gap: 15px; }
.avatar { width: 36px; height: 36px; }
.comment { width: 756px; height: 121px; border: 1px solid #2e4c80; border-radius: 6px; position: relative; }
.comment::before { content: ""; position: absolute; left: -5px; top: 13px; width: 8px; height: 8px; background: #252f42; border: solid #2e4c80; border-width: 0 0 1px 1px; transform: rotate(45deg); }
.comment header { height: 33px; background: #252f42; border-bottom: 1px solid #2e4c80; border-radius: 5px 5px 0 0; display: flex; align-items: center; padding: 0 18px 0 14px; color: #9198a1; letter-spacing: -.36px; }
.comment header b { color: #d1d7e0; font-weight: 600; letter-spacing: -.28px; }
.comment u { line-height: 15px; border-bottom: 1px solid #9198a1; margin-top: 1px; }
.owner { margin-left: auto; width: 46px; height: 19px; border: 1px solid #2e4c80; border-radius: 10px; font-size: 10.800px; line-height: 16px; text-align: center; letter-spacing: -.15px; }
.dots { display: flex; gap: 4px; margin-left: 9px; }
.dots i { width: 3px; height: 3px; border-radius: 50%; background: #9198a1; }
.comment p { margin: 16px 14px 0; line-height: 18px; font-style: italic; color: #9198a1; letter-spacing: -.24px; }
.react { width: 23px; height: 23px; margin: 14px; border: 1px solid #343b45; border-radius: 50%; display: grid; place-items: center; }
.timeline { border-bottom: 1px solid #3d444d; height: 116px; margin-bottom: 15px; }
.event { height: 57.500px; display: flex; align-items: center; padding-left: 52px; background: linear-gradient(#343b45, #343b45) 65px 0 / 2px 100% no-repeat; color: #9198a1; font: 10.300px "DejaVu Sans Mono", monospace; letter-spacing: -.26px; }
.badge { width: 28px; height: 30px; border: 1px solid #212830; border-radius: 50%; background: #252c36; display: grid; place-items: center; color: #9198a1; margin-right: 8px; }
.mini { width: 18px; height: 18px; margin: -3px 5px 0 0; }
.event a { border-bottom: 1px solid #9198a1; line-height: 13px; margin-top: 1px; }
.event .sha { margin-left: auto; }
.more { width: 17px; height: 11px; background: #2f3742; margin-left: 11px; display: flex; gap: 1px; align-items: center; justify-content: center; }
.more i { width: 2px; height: 2px; background: #d1d7e0; }
.merge { margin-bottom: 15px; }
.merge-icon { width: 36px; height: 36px; margin: 0 -1px 0 1px; padding-right: 1px; border-radius: 5px; background: #347d39; display: grid; place-items: center; }
.merge-box { width: 756px; height: 129px; border: 1px solid #347d39; border-radius: 6px; overflow: hidden; }
.mergeable { height: 69px; padding: 14px; display: flex; gap: 7px; }
.ok { width: 29px; height: 29px; border-radius: 50%; background: #347d39; display: grid; place-items: center; }
h3 { font-size: 14.400px; font-weight: 600; line-height: 22px; letter-spacing: -.42px; }
.mergeable p { color: #9198a1; line-height: 20px; letter-spacing: -.29px; }
.merge-actions { height: 58px; border-top: 1px solid #343b45; background: #262c36; display: flex; align-items: center; padding-left: 14px; color: #9198a1; font-size: 10.800px; }
.merge-actions a { color: #478be6; text-decoration: underline; }
.merge-btn { width: 160px; height: 29px; margin-right: 6px; border-radius: 5px; background: #3d8a42; box-shadow: 0 1px 2px #0008; color: #fff; font-weight: 600; font-size: 12.600px; letter-spacing: -.4px; display: flex; align-items: center; justify-content: space-between; padding-left: 12px; overflow: hidden; white-space: nowrap; }
.merge-btn > span { width: 28px; height: 29px; background: #347d39; border-left: 1px solid #275e2b; display: grid; place-items: center; }
.reply { width: 756px; }
.reply h3 { height: 29px; font-size: 13.600px; letter-spacing: 0; }
.editor { height: 177px; border: 1px solid #3d444d; border-radius: 6px; }
.editor-head { height: 35px; background: #262c36; border-bottom: 1px solid #3d444d; border-radius: 5px 5px 0 0; display: flex; align-items: center; }
.write { width: 60px; height: 35px; margin-bottom: -1px; padding-left: 14px; line-height: 34px; background: #212830; border-right: 1px solid #3d444d; border-radius: 5px 5px 0 0; }
.preview { margin-left: 15px; color: #9198a1; }
.tools { margin-left: auto; padding-right: 11px; display: flex; align-items: center; color: #9da5ae; }
.tools > * { margin-left: 14.800px; width: 14px; height: 14px; }
.tools svg { fill: none; stroke: currentColor; stroke-width: 1.500; }
.tools .solid { fill: currentColor; stroke: none; }
.tools s { width: 1px; height: 14px; background: #3d444d; }
.tools b { font: 500 15px/14px "Open Sans", sans-serif; text-align: center; }
.tools .bold { font-weight: 700; }
.tools .ital { font-family: "Liberation Mono", monospace; font-style: italic; font-size: 18px; line-height: 16px; }
.tools .at { font-size: 15px; line-height: 11px; }
.textarea { margin: 7px 8px 0 7px; height: 94px; border: 1px solid #3d444d; border-radius: 5px; padding: 9px 8px; line-height: 18px; color: #9198a1; display: flex; justify-content: space-between; letter-spacing: -.34px; }
.textarea svg { align-self: flex-end; margin: 0 -7px -8px 0; }
.editor-foot { display: flex; align-items: center; height: 25px; margin-top: 7px; padding-left: 15px; font-size: 10.800px; }
.editor-foot b { font-weight: 600; margin-left: 3px; white-space: nowrap; letter-spacing: -.3px; }
.editor-foot s { width: 1px; height: 24px; background: #3d444d; margin: 0 15px; }
.form-actions { display: flex; justify-content: flex-end; gap: 4px; margin-top: 8px; }
.form-actions .btn { height: 29px; letter-spacing: -.4px; }
.close { width: 154px; gap: 7px; }
.submit { width: 87px; background: #165c22; border-color: #165c22; color: #6a9a72; }
.remember { display: flex; align-items: center; gap: 4px; height: 18px; margin-top: 5px; font-size: 10.800px; color: #9198a1; letter-spacing: -.29px; }
.remember a { color: #478be6; border-bottom: 1px solid #478be6; }
.protip { display: flex; align-items: center; gap: 5px; height: 18px; margin-top: 14px; padding-left: 253px; color: #9198a1; }
.protip b { color: #d1d7e0; } .protip a { color: #478be6; }

aside { width: 267px; font-size: 10.800px; line-height: 16px; letter-spacing: -.1px; }
aside section { height: 69px; border-bottom: 1px solid #343b45; padding-top: 14px; }
aside .s-rev { height: 100px; } aside .s-proj { height: 70px; } aside .s-dev { height: 111px; } aside .s-not { height: 114px; } aside .s-part { height: 80px; padding-top: 15px; }
aside p { letter-spacing: -.25px; }
h4 { font-size: 10.800px; font-weight: 500; color: #9198a1; display: flex; justify-content: space-between; align-items: center; height: 16px; margin-bottom: 8px; }
h4 svg { width: 14px; height: 14px; margin-right: 1px; }
h4 span { font-weight: 400; letter-spacing: -.2px; }
aside u { color: #9198a1; border-bottom: 1px solid #9198a1; }
.gap7 { margin-top: 7px; } .gap9 { margin-top: 9px; }
.unsub { height: 25px; gap: 5px; letter-spacing: -.35px; padding-bottom: 1px; }
.muted { color: #9198a1; line-height: 17px; margin-top: 2px; }
.pa { width: 24px; height: 24px; margin-top: 10px; }
.watermark { position: absolute; left: 1599px; top: 817px; color: #7d8083; font-size: 14.700px; line-height: 20px; letter-spacing: -.14px; }
.watermark b { display: block; font-weight: 400; font-size: 19px; line-height: 25px; letter-spacing: .05px; }

/* taskbar */
.taskbar { height: 47px; border-top: 1px solid #3c4650; background: linear-gradient(90deg, #1b2a38, #13244a 25%, #12224a 62%, #1a2836 75%, #1c2833); display: flex; align-items: center; color: #fff; }
.apps-row { display: flex; align-items: center; padding-left: 551px; }
.search { width: 220px; height: 32px; margin: 0 2px 0 13px; border-radius: 16px; background: #364360; border: 1px solid #45506c; display: flex; align-items: center; gap: 10px; padding-left: 10px; font-size: 13.600px; color: #d6d9e0; letter-spacing: -.2px; }
.app { width: 40px; height: 40px; margin: 0 2px; border-radius: 5px; display: grid; place-items: center; position: relative; }
.app svg { width: 24px; height: 24px; }
.t-teams { font: 700 10px "Open Sans", sans-serif; fill: #fff; }
.current { background: #27345a; }
.open::after, .current::after { content: ""; position: absolute; bottom: 1px; left: 17px; width: 6px; height: 3px; border-radius: 2px; background: #9aa0ab; }
.current::after { left: 12px; width: 16px; background: #4cc2f5; }
.tray { margin-left: auto; display: flex; align-items: center; padding-right: 18px; font-size: 12px; }
.tray svg { margin-right: 14px; }
.tray .chev { margin-right: 17px; }
.tray .wifi { margin-right: 7px; }
.lang { width: 24px; margin: 0 18px 0 4px; font-size: 11.500px; letter-spacing: -.2px; }
.clock { width: 63px; text-align: right; font-size: 11.800px; line-height: 16px; letter-spacing: -.1px; white-space: nowrap; }
```
